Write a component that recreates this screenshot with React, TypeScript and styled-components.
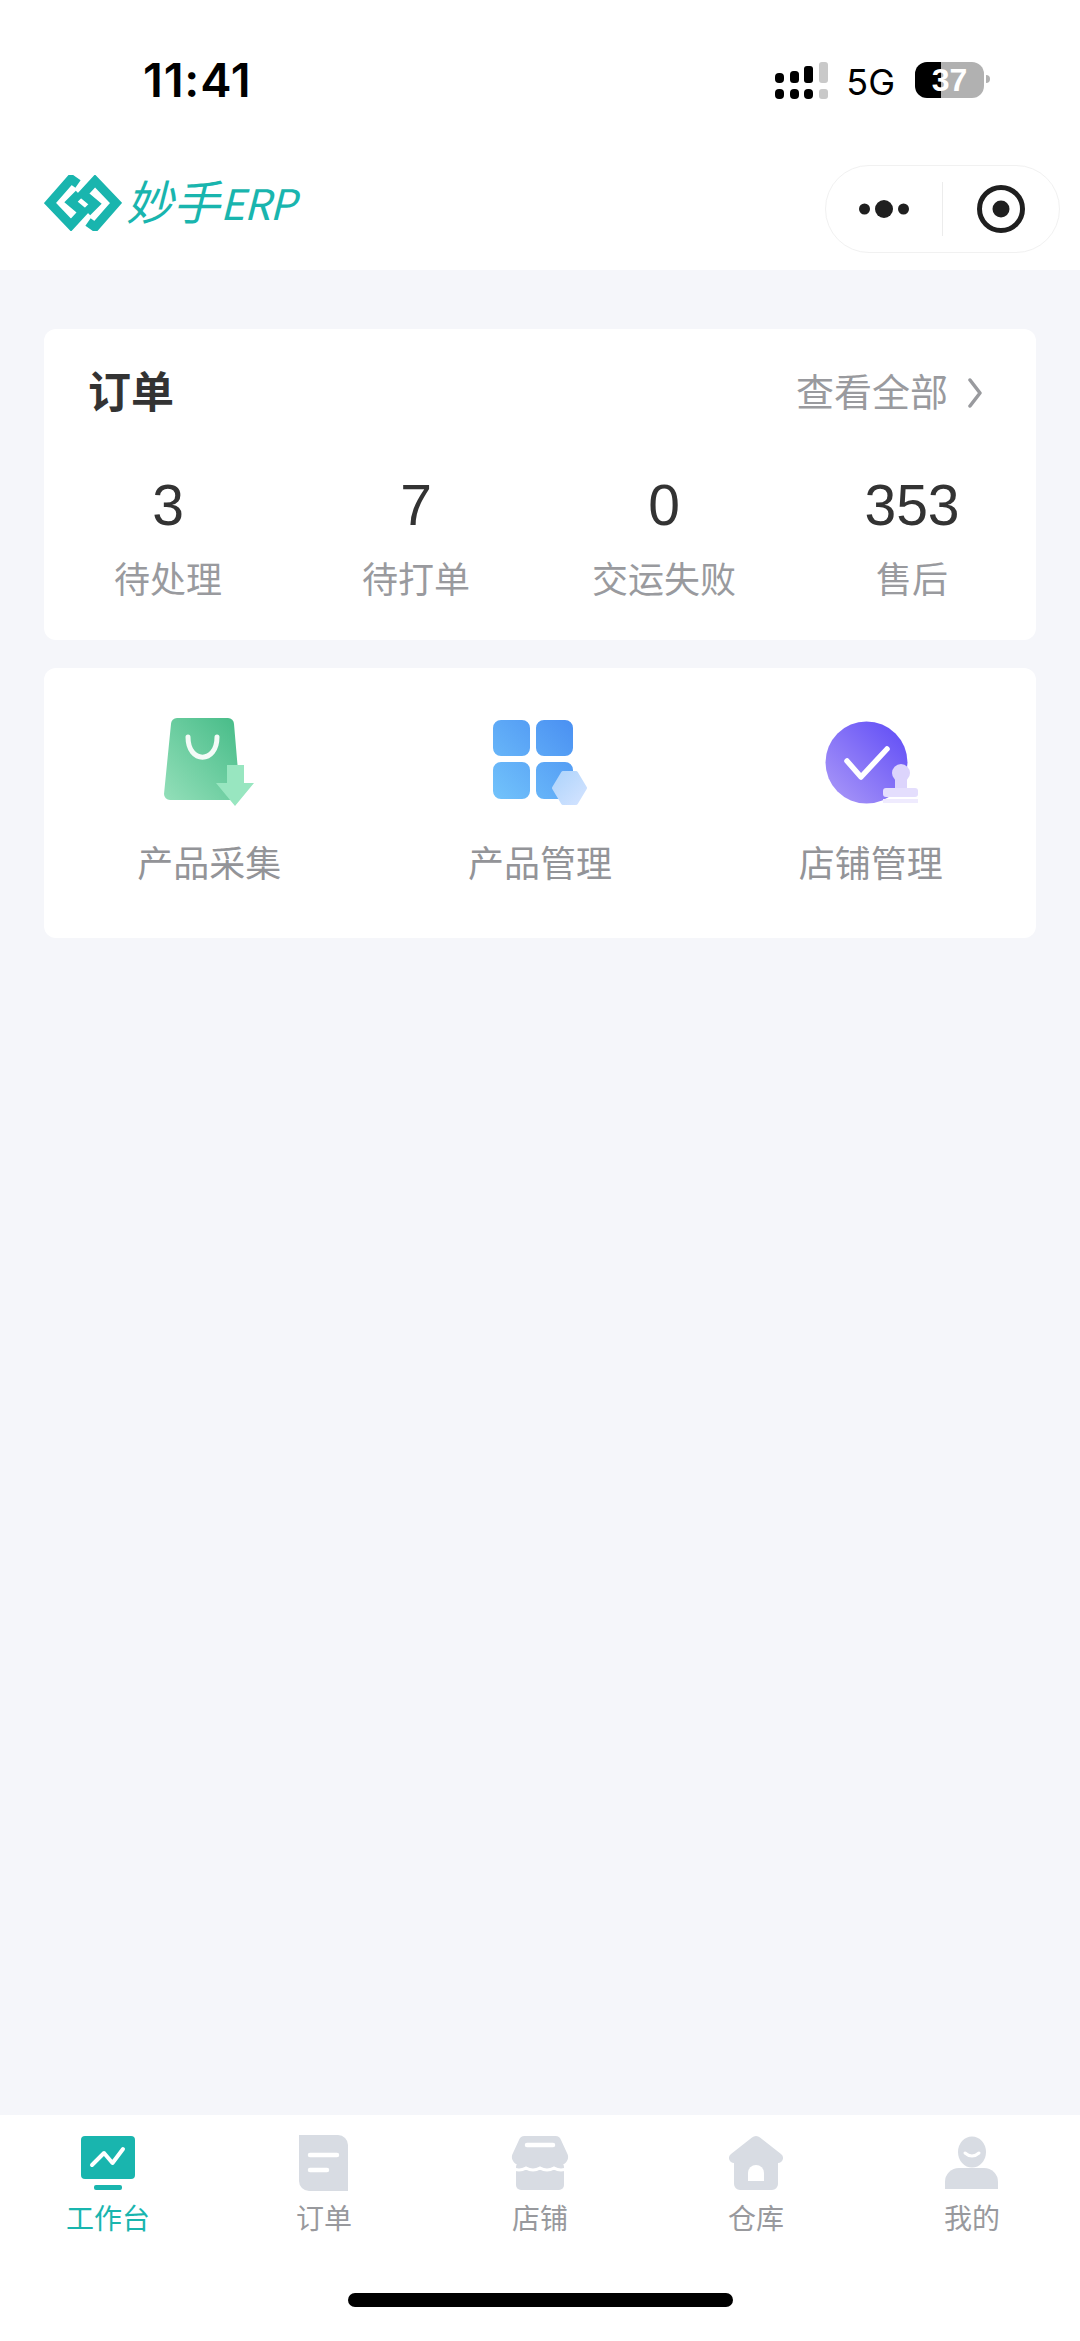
import React from 'react';
import styled, { createGlobalStyle } from 'styled-components';

const GlobalStyle = createGlobalStyle`
  html, body {
    margin: 0;
    padding: 0;
    background: #f5f6fa;
  }
  * {
    box-sizing: border-box;
  }
`;

const FONT = `"Liberation Sans", "Noto Sans CJK SC", sans-serif`;
const TEAL = '#19b5ae';
const TAB_GRAY = '#d8dce3';

const Page = styled.div`
  width: 1080px;
  height: 2341px;
  display: flex;
  flex-direction: column;
  background: #f5f6fa;
  font-family: ${FONT};
  overflow: hidden;
`;

const TopArea = styled.header`
  background: #fff;
  height: 270px;
`;

const StatusBar = styled.div`
  height: 132px;
  padding: 40px 90px 0 143px;
  display: flex;
  justify-content: space-between;
  align-items: flex-start;
`;

const Time = styled.div`
  font-family: Inter, sans-serif;
  font-size: 47px;
  line-height: 80px;
  height: 80px;
  font-weight: 600;
  letter-spacing: 0.8px;
  color: #000;
`;

const StatusRight = styled.div`
  display: flex;
  align-items: flex-start;
  padding-top: 22px;
`;

const FiveG = styled.span`
  font-family: Inter, sans-serif;
  font-size: 36px;
  line-height: 36px;
  margin: 2px 20px 0 18px;
  color: #000;
`;

const Battery = styled.div`
  width: 69px;
  height: 36px;
  border-radius: 12px;
  background: linear-gradient(90deg, #000 38%, #b1b1b1 38%);
  color: #fff;
  font-size: 32px;
  font-weight: 700;
  line-height: 36px;
  text-align: center;
`;

const BatteryNub = styled.div`
  width: 4px;
  height: 8px;
  margin: 13px 0 0 2px;
  border-radius: 0 4px 4px 0;
  background: #b1b1b1;
`;

const NavBar = styled.div`
  height: 138px;
  padding: 0 20px 0 44px;
  display: flex;
  justify-content: space-between;
`;

const Logo = styled.div`
  display: flex;
  align-items: center;
  height: 88px;
  margin-top: 27px;
  gap: 4px;
  color: ${TEAL};
`;

const LogoText = styled.span`
  font-family: "Noto Sans CJK SC", sans-serif;
  font-size: 47px;
  line-height: 60px;
  margin-top: -4px;
  font-style: italic;
  font-weight: 400;
`;

const LogoLatin = styled.span`
  font-size: 42px;
  letter-spacing: -1px;
`;

const Capsule = styled.div`
  width: 235px;
  height: 88px;
  margin-top: 33px;
  border: 1px solid #f1f1f1;
  border-radius: 44px;
  display: grid;
  grid-template-columns: 1fr 1px 1fr;
  align-items: center;
  justify-items: center;
  background: #fff;
`;

const CapsuleDivider = styled.div`
  width: 1px;
  height: 54px;
  background: #ececec;
`;

const Main = styled.main`
  flex: 1;
  padding: 59px 44px 0;
  display: flex;
  flex-direction: column;
  gap: 28px;
`;

const Card = styled.section`
  background: #fff;
  border-radius: 12px;
`;

const OrderCard = styled(Card)`
  padding: 36px 0 34px;
`;

const OrderHead = styled.div`
  height: 56px;
  padding: 0 53px 0 44px;
  display: flex;
  justify-content: space-between;
  align-items: center;
`;

const CardTitle = styled.h2`
  margin: 0;
  font-size: 43px;
  line-height: 56px;
  font-weight: 700;
  color: #333;
`;

const ViewAll = styled.div`
  display: flex;
  align-items: center;
  gap: 19px;
  font-size: 38px;
  line-height: 56px;
  color: #999a9e;
`;

const StatGrid = styled.div`
  display: grid;
  grid-template-columns: repeat(4, 1fr);
  margin-top: 52px;
`;

const Stat = styled.div`
  display: flex;
  flex-direction: column;
  align-items: center;
`;

const StatValue = styled.div`
  font-size: 57px;
  line-height: 64px;
  color: #333;
`;

const StatLabel = styled.div`
  margin-top: 19px;
  font-size: 36px;
  line-height: 50px;
  color: #999a9e;
`;

const ToolGrid = styled(Card)`
  display: grid;
  grid-template-columns: repeat(3, 1fr);
  padding: 46px 0 48px;
`;

const Tool = styled.div`
  display: flex;
  flex-direction: column;
  align-items: center;
`;

const ToolIcon = styled.div`
  width: 96px;
  height: 96px;
  filter: blur(0.7px);
`;

const ToolLabel = styled.div`
  margin-top: 30px;
  font-size: 36px;
  line-height: 50px;
  color: #939498;
`;

const TabBar = styled.nav`
  height: 226px;
  background: #fff;
  display: flex;
  flex-direction: column;
`;

const TabRow = styled.div`
  display: grid;
  grid-template-columns: repeat(5, 1fr);
  padding-top: 17px;
`;

const Tab = styled.div<{ $active?: boolean }>`
  display: flex;
  flex-direction: column;
  align-items: center;
  color: ${p => (p.$active ? TEAL : '#98999d')};
`;

const TabIcon = styled.div`
  width: 64px;
  height: 64px;
  filter: blur(0.4px);
`;

const TabLabel = styled.div`
  margin-top: 6px;
  font-size: 28px;
  line-height: 36px;
`;

const HomeIndicator = styled.div`
  width: 385px;
  height: 14px;
  margin: 55px auto 0;
  border-radius: 7px;
  background: #000;
`;

const SignalIcon = () => (
  <svg width="53" height="37" viewBox="0 0 53 37">
    <rect x="0" y="11" width="9" height="10" rx="4" fill="#000" />
    <rect x="15" y="9" width="9" height="12" rx="3.5" fill="#000" />
    <rect x="29" y="4" width="9" height="17" rx="3" fill="#000" />
    <rect x="44" y="0" width="9" height="21" rx="3" fill="#c9c9c9" />
    <rect x="0" y="27" width="9" height="10" rx="4" fill="#000" />
    <rect x="15" y="27" width="9" height="10" rx="4" fill="#000" />
    <rect x="29" y="27" width="9" height="10" rx="4" fill="#000" />
    <rect x="44" y="27" width="9" height="10" rx="3" fill="#c9c9c9" />
  </svg>
);

const LogoMark = () => (
  <svg width="78" height="56" viewBox="0 0 78 56" fill="none" stroke={TEAL} strokeWidth="9">
    <path d="M34 9 L27 4 L6 28 L27 50 L39 37 L27 27 L35 19" strokeLinejoin="miter" />
    <path d="M44 47 L51 52 L72 28 L51 6 L39 19 L51 29 L43 37" strokeLinejoin="miter" />
  </svg>
);

const MoreDots = () => (
  <svg width="50" height="20" viewBox="0 0 50 20" fill="#1f1f1f">
    <circle cx="5.5" cy="10" r="5.5" />
    <circle cx="25" cy="10" r="9" />
    <circle cx="44.5" cy="10" r="5.5" />
  </svg>
);

const CloseTarget = () => (
  <svg width="48" height="48" viewBox="0 0 48 48">
    <circle cx="24" cy="24" r="21.5" fill="none" stroke="#1f1f1f" strokeWidth="5" />
    <circle cx="24" cy="24" r="8.5" fill="#1f1f1f" />
  </svg>
);

const Chevron = () => (
  <svg width="16" height="30" viewBox="0 0 16 30" fill="none">
    <path d="M3 2 L13 15 L3 28" stroke="#999a9e" strokeWidth="3.5" strokeLinecap="round" strokeLinejoin="round" />
  </svg>
);

const BagIcon = () => (
  <svg width="96" height="96" viewBox="0 0 96 96">
    <defs>
      <linearGradient id="bagFill" x1="1" y1="0" x2="0" y2="1">
        <stop offset="0" stopColor="#45bb87" />
        <stop offset="1" stopColor="#93dfb9" />
      </linearGradient>
    </defs>
    <path d="M16 4 H67 a6 6 0 0 1 6 6 L79 80 a6 6 0 0 1 -6 6 H9 a6 6 0 0 1 -6 -6 L10 10 a6 6 0 0 1 6 -6 Z" fill="url(#bagFill)" />
    <path d="M27 23 C27 50 56 50 56 23" fill="none" stroke="#f4fbf7" strokeWidth="5" strokeLinecap="round" />
    <path d="M66 51 H83 V69 H93 L74 92 L55 69 H66 Z" fill="#98e6c0" />
  </svg>
);

const GridIcon = () => (
  <svg width="96" height="96" viewBox="0 0 96 96">
    <defs>
      <linearGradient id="gridFill" x1="1" y1="0" x2="0" y2="1">
        <stop offset="0" stopColor="#4a90f2" />
        <stop offset="1" stopColor="#72c3fb" />
      </linearGradient>
      <linearGradient id="hexFill" x1="0" y1="0" x2="1" y2="1">
        <stop offset="0" stopColor="#aed4fb" />
        <stop offset="1" stopColor="#d3e3ff" />
      </linearGradient>
    </defs>
    <path
      fill="url(#gridFill)"
      d="M9 6 H30 a8 8 0 0 1 8 8 V34 a8 8 0 0 1 -8 8 H9 a8 8 0 0 1 -8 -8 V14 a8 8 0 0 1 8 -8 Z
         M52 6 H73 a8 8 0 0 1 8 8 V34 a8 8 0 0 1 -8 8 H52 a8 8 0 0 1 -8 -8 V14 a8 8 0 0 1 8 -8 Z
         M9 48 H30 a8 8 0 0 1 8 8 V77 a8 8 0 0 1 -8 8 H9 a8 8 0 0 1 -8 -8 V56 a8 8 0 0 1 8 -8 Z
         M52 48 H73 a8 8 0 0 1 8 8 V77 a8 8 0 0 1 -8 8 H52 a8 8 0 0 1 -8 -8 V56 a8 8 0 0 1 8 -8 Z"
    />
    <path d="M71 59 H84 L93 74 L84 89 H71 L62 74 Z" fill="url(#hexFill)" stroke="url(#hexFill)" strokeWidth="4" strokeLinejoin="round" />
  </svg>
);

const CheckIcon = () => (
  <svg width="96" height="96" viewBox="0 0 96 96">
    <defs>
      <linearGradient id="checkFill" x1="1" y1="0" x2="0" y2="1">
        <stop offset="0" stopColor="#5d49f6" />
        <stop offset="1" stopColor="#ad9bf8" />
      </linearGradient>
    </defs>
    <circle cx="43.5" cy="48.5" r="41" fill="url(#checkFill)" />
    <path d="M24 47 L38 63 L64 35" fill="none" stroke="#fff" strokeWidth="5.5" strokeLinecap="round" strokeLinejoin="round" />
    <circle cx="78" cy="59" r="9" fill="#dcd4fc" />
    <rect x="72" y="62" width="12" height="14" fill="#dcd4fc" />
    <rect x="60" y="74" width="35" height="9" rx="3" fill="#e4defd" />
    <rect x="60" y="85" width="35" height="4" fill="#efebfe" />
  </svg>
);

const WorkbenchIcon = () => (
  <svg width="64" height="64" viewBox="0 0 64 64">
    <rect x="5" y="4" width="54" height="43" rx="4" fill={TEAL} />
    <rect x="18" y="53" width="28" height="5" rx="2" fill={TEAL} />
    <path d="M16 33 L28 21 L36.5 31 L47 17" fill="none" stroke="#fff" strokeWidth="4" strokeLinecap="round" strokeLinejoin="round" />
  </svg>
);

const OrderIcon = () => (
  <svg width="64" height="64" viewBox="0 0 64 64">
    <path d="M7 3 H46 a10 10 0 0 1 10 10 V59 H17 a10 10 0 0 1 -10 -10 Z" fill={TAB_GRAY} />
    <path d="M18 23 H45 M18 38 H35" stroke="#fff" strokeWidth="4.5" strokeLinecap="round" />
  </svg>
);

const StoreIcon = () => (
  <svg width="64" height="64" viewBox="0 0 64 64">
    <rect x="8" y="30" width="48" height="28" rx="5" fill={TAB_GRAY} />
    <path
      d="M17 4 H47 a6 6 0 0 1 6 4 L59 21 a8 8 0 0 1 -7 12 q-5 3 -10 0 q-5 3 -10 0 q-5 3 -10 0 q-5 3 -10 0 a8 8 0 0 1 -7 -12 L11 8 a6 6 0 0 1 6 -4 Z"
      fill={TAB_GRAY}
    />
    <path d="M4 36 q7 4 14 0 q7 4 14 0 q7 4 14 0 q7 4 14 0" fill="none" stroke="#fff" strokeWidth="3" />
    <path d="M19 13 H45" stroke="#fff" strokeWidth="4.5" strokeLinecap="round" />
  </svg>
);

const WarehouseIcon = () => (
  <svg width="64" height="64" viewBox="0 0 64 64">
    <path
      d="M28 5.5 a6 6 0 0 1 8 0 L57 22 a5 5 0 0 1 -3 9 V52 a6 6 0 0 1 -6 6 H16 a6 6 0 0 1 -6 -6 V31 a5 5 0 0 1 -3 -9 Z"
      fill={TAB_GRAY}
    />
    <path d="M24 49 V41 a8 8 0 0 1 16 0 V49 Z" fill="#fff" />
  </svg>
);

const ProfileIcon = () => (
  <svg width="64" height="64" viewBox="0 0 64 64">
    <ellipse cx="32" cy="20" rx="14" ry="15.5" fill={TAB_GRAY} />
    <path d="M25 21 q7 6 14 0" fill="none" stroke="#fff" strokeWidth="3" strokeLinecap="round" />
    <path d="M5 57 V50 a14 14 0 0 1 14 -14 H44 a14 14 0 0 1 14 14 V57 Z" fill={TAB_GRAY} />
  </svg>
);

const stats = [
  { value: '3', label: '待处理' },
  { value: '7', label: '待打单' },
  { value: '0', label: '交运失败' },
  { value: '353', label: '售后' },
];

const tools = [
  { icon: <BagIcon />, label: '产品采集' },
  { icon: <GridIcon />, label: '产品管理' },
  { icon: <CheckIcon />, label: '店铺管理' },
];

const tabs = [
  { icon: <WorkbenchIcon />, label: '工作台', active: true },
  { icon: <OrderIcon />, label: '订单' },
  { icon: <StoreIcon />, label: '店铺' },
  { icon: <WarehouseIcon />, label: '仓库' },
  { icon: <ProfileIcon />, label: '我的' },
];

export default function App() {
  return (
    <Page>
      <GlobalStyle />
      <TopArea>
        <StatusBar>
          <Time>11:41</Time>
          <StatusRight>
            <SignalIcon />
            <FiveG>5G</FiveG>
            <Battery>37</Battery>
            <BatteryNub />
          </StatusRight>
        </StatusBar>
        <NavBar>
          <Logo>
            <LogoMark />
            <LogoText>
              妙手<LogoLatin>ERP</LogoLatin>
            </LogoText>
          </Logo>
          <Capsule>
            <MoreDots />
            <CapsuleDivider />
            <CloseTarget />
          </Capsule>
        </NavBar>
      </TopArea>

      <Main>
        <OrderCard>
          <OrderHead>
            <CardTitle>订单</CardTitle>
            <ViewAll>
              查看全部
              <Chevron />
            </ViewAll>
          </OrderHead>
          <StatGrid>
            {stats.map(s => (
              <Stat key={s.label}>
                <StatValue>{s.value}</StatValue>
                <StatLabel>{s.label}</StatLabel>
              </Stat>
            ))}
          </StatGrid>
        </OrderCard>

        <ToolGrid>
          {tools.map(t => (
            <Tool key={t.label}>
              <ToolIcon>{t.icon}</ToolIcon>
              <ToolLabel>{t.label}</ToolLabel>
            </Tool>
          ))}
        </ToolGrid>
      </Main>

      <TabBar>
        <TabRow>
          {tabs.map(t => (
            <Tab key={t.label} $active={t.active}>
              <TabIcon>{t.icon}</TabIcon>
              <TabLabel>{t.label}</TabLabel>
            </Tab>
          ))}
        </TabRow>
        <HomeIndicator />
      </TabBar>
    </Page>
  );
}
